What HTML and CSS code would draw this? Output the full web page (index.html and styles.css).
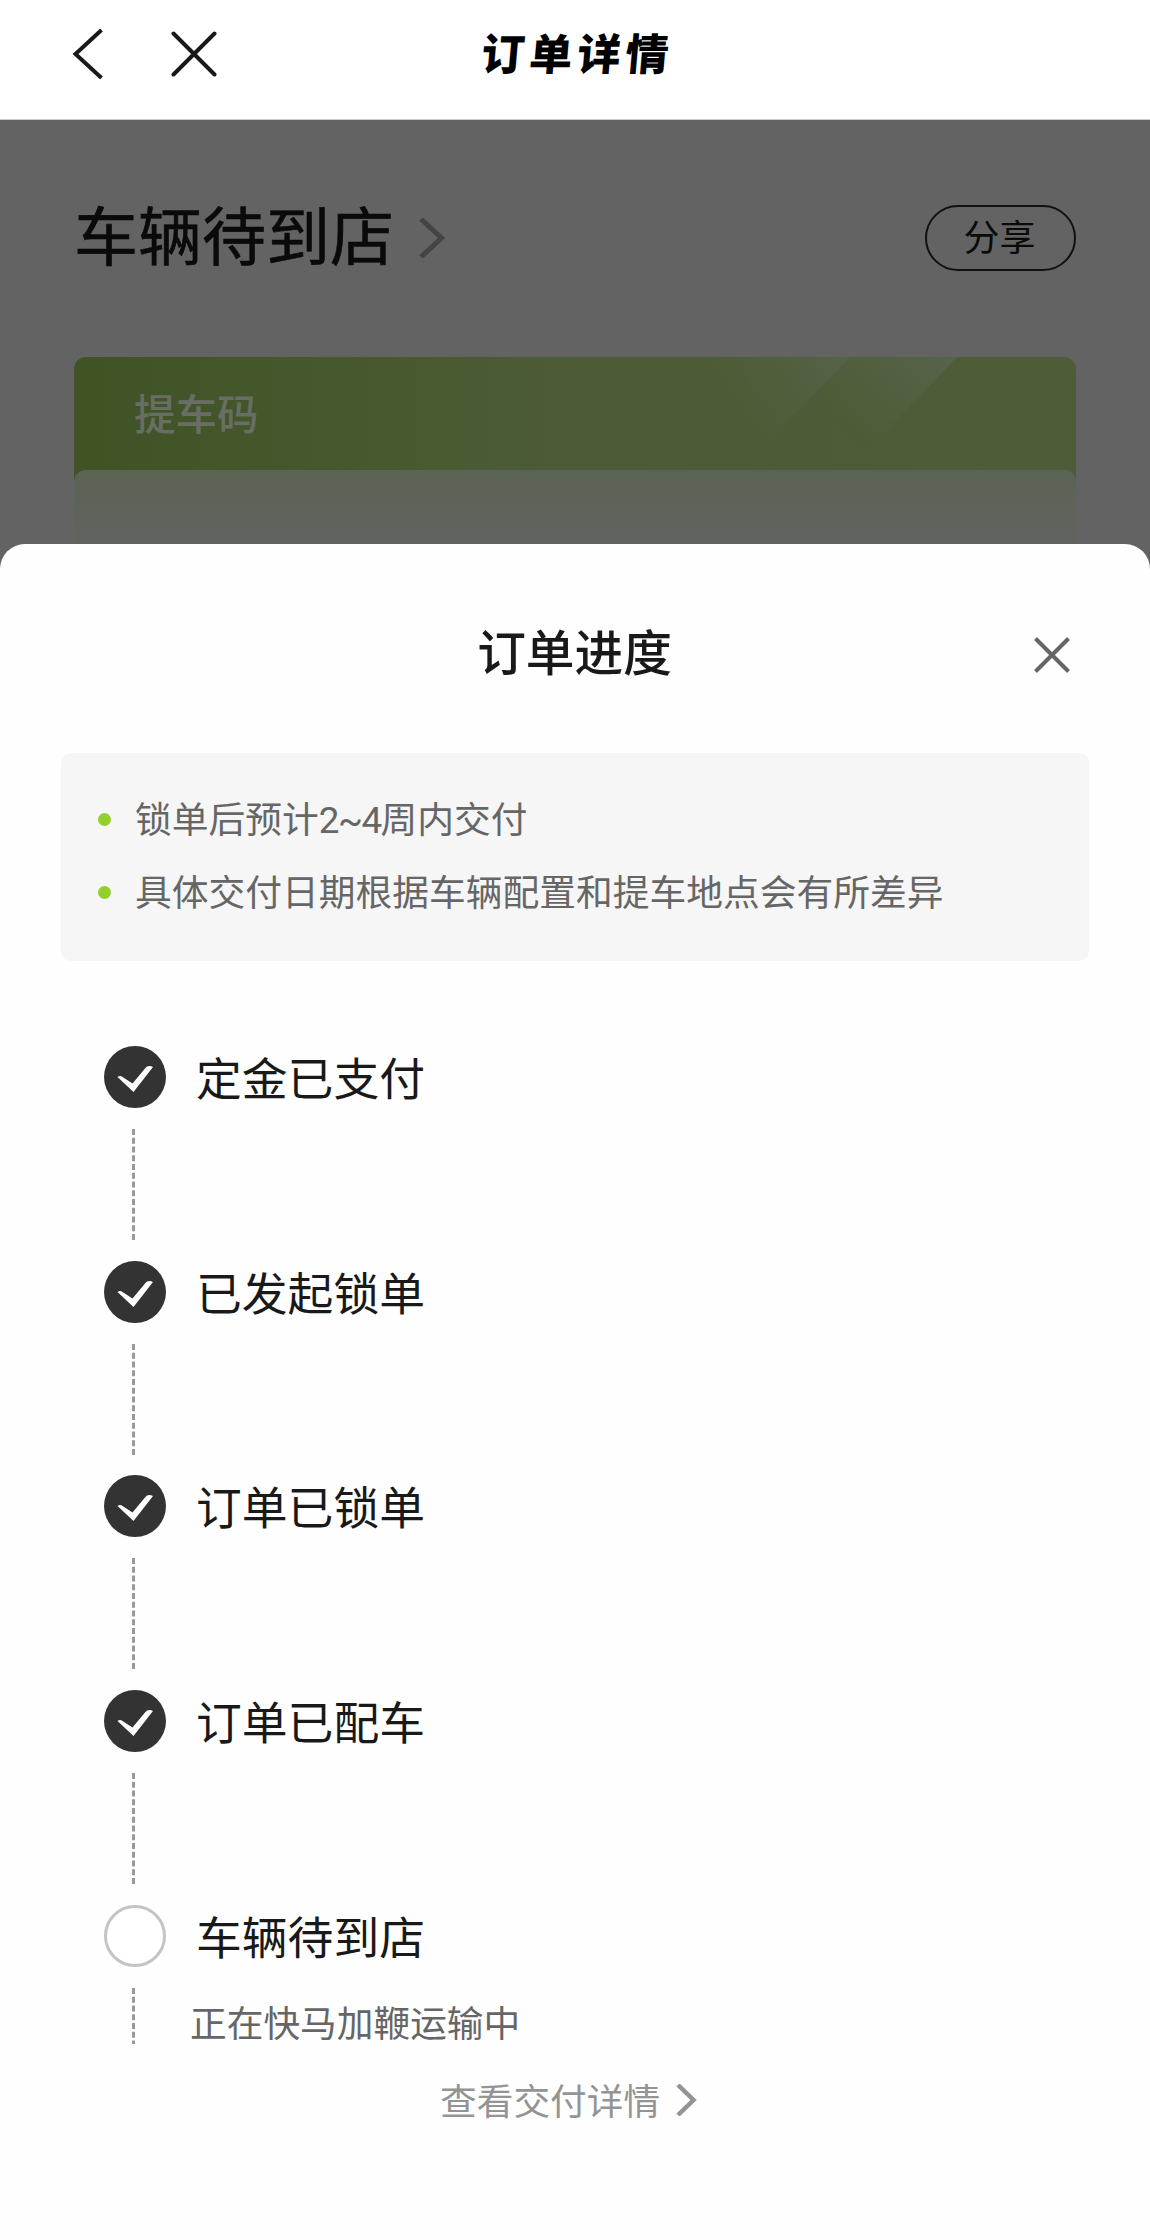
FILE: index.html
```html
<!DOCTYPE html>
<html lang="zh-CN">
<head>
<meta charset="utf-8">
<title>订单详情</title>
<link rel="stylesheet" href="styles.css">
</head>
<body>
<header class="navbar">
  <svg class="nav-back" viewBox="0 0 32 50" fill="none" stroke="#191919" stroke-width="4"><path d="M29.5 1 3.5 25l26 24"/></svg>
  <svg class="nav-close" viewBox="0 0 46 46" fill="none" stroke="#191919" stroke-width="4" stroke-linecap="round"><path d="M2.5 2.5l41 41M43.500 2.500l-41 41"/></svg>
  <h1 class="nav-title">订单详情</h1>
</header>
<main class="order">
  <div class="status">
    <h2 class="status-title">车辆待到店</h2>
    <svg class="status-arrow" viewBox="0 0 27 40" fill="none" stroke="#444" stroke-width="5"><path d="M2 1l20.500 19L2 39"/></svg>
    <button class="share">分享</button>
  </div>
  <section class="pickup">
    <svg class="pickup-rays" viewBox="0 0 320 114" preserveAspectRatio="none">
      <defs>
        <linearGradient id="ray" gradientUnits="userSpaceOnUse" x1="186" y1="0" x2="100" y2="90"><stop offset="0" stop-color="#566349" /><stop offset="1" stop-color="#566349" stop-opacity="0"/></linearGradient>
        <linearGradient id="ray2" gradientUnits="userSpaceOnUse" x1="293" y1="0" x2="210" y2="90"><stop offset="0" stop-color="#566349"/><stop offset="1" stop-color="#566349" stop-opacity="0"/></linearGradient>
        <linearGradient id="edge" x1="0" y1="0" x2="1" y2="0"><stop offset="0" stop-color="#000"/><stop offset="0.600" stop-color="#fff"/></linearGradient>
        <mask id="fade"><rect width="320" height="114" fill="url(#edge)"/></mask>
      </defs>
      <g mask="url(#fade)">
        <path fill="url(#ray)" d="M50 0H196L86 114H0z"/>
        <path fill="url(#ray2)" d="M196 0H303L194 114H86z"/>
      </g>
    </svg>
    <h3 class="pickup-title">提车码</h3>
    <div class="pickup-body"></div>
  </section>
</main>
<section class="sheet">
  <div class="sheet-head">
    <h2 class="sheet-title">订单进度</h2>
    <svg class="sheet-close" viewBox="0 0 36 36" fill="none" stroke="#666" stroke-width="4"><path d="M1.500 1.500l33 33M34.500 1.500l-33 33"/></svg>
  </div>
  <ul class="notes">
    <li class="note"><span class="note-text">锁单后预计<span class="latin">2~4</span>周内交付</span></li>
    <li class="note"><span class="note-text">具体交付日期根据车辆配置和提车地点会有所差异</span></li>
  </ul>
  <ol class="steps">
    <li class="step">
      <svg class="mark" viewBox="0 0 62 62"><circle cx="31" cy="31" r="31" fill="#333"/><path class="tick" d="M13.500 31Q16 29 18.500 31L28.500 37.500 41 22.500Q44 18.500 49 21L29.500 46z"/></svg>
      <span class="step-name">定金已支付</span>
      <svg class="link" viewBox="0 0 3 112"><path d="M1.500 0V112"/></svg>
    </li>
    <li class="step">
      <svg class="mark" viewBox="0 0 62 62"><circle cx="31" cy="31" r="31" fill="#333"/><path class="tick" d="M13.500 31Q16 29 18.500 31L28.500 37.500 41 22.500Q44 18.500 49 21L29.500 46z"/></svg>
      <span class="step-name">已发起锁单</span>
      <svg class="link" viewBox="0 0 3 112"><path d="M1.500 0V112"/></svg>
    </li>
    <li class="step">
      <svg class="mark" viewBox="0 0 62 62"><circle cx="31" cy="31" r="31" fill="#333"/><path class="tick" d="M13.500 31Q16 29 18.500 31L28.500 37.500 41 22.500Q44 18.500 49 21L29.500 46z"/></svg>
      <span class="step-name">订单已锁单</span>
      <svg class="link" viewBox="0 0 3 112"><path d="M1.500 0V112"/></svg>
    </li>
    <li class="step">
      <svg class="mark" viewBox="0 0 62 62"><circle cx="31" cy="31" r="31" fill="#333"/><path class="tick" d="M13.500 31Q16 29 18.500 31L28.500 37.500 41 22.500Q44 18.500 49 21L29.500 46z"/></svg>
      <span class="step-name">订单已配车</span>
      <svg class="link" viewBox="0 0 3 112"><path d="M1.500 0V112"/></svg>
    </li>
    <li class="step current">
      <svg class="mark" viewBox="0 0 62 62"><circle cx="31" cy="31" r="29.500" fill="#fff" stroke="#c4c4c4" stroke-width="3"/></svg>
      <span class="step-name">车辆待到店</span>
      <svg class="link short" viewBox="0 0 3 56"><path d="M1.500 0V56"/></svg>
      <span class="step-note">正在快马加鞭运输中</span>
    </li>
  </ol>
  <a class="more">查看交付详情
    <svg class="more-arrow" viewBox="0 0 22 32" fill="none" stroke="#949494" stroke-width="4.500"><path d="M2 1l15.500 15L2 31"/></svg>
  </a>
</section>
</body>
</html>
```
FILE: styles.css
```css
* { box-sizing: border-box; }
body {
  margin: 0;
  width: 1150px;
  height: 2240px;
  overflow: hidden;
  display: flex;
  flex-direction: column;
  background: #636363;
  font-family: "Noto Sans CJK SC", sans-serif;
  color: #191919;
}
h1, h2, h3, ul, ol { margin: 0; padding: 0; font-weight: 400; }
ul, ol { list-style: none; }
svg { display: block; flex: none; }

.navbar {
  flex: none;
  height: 120px;
  display: grid;
  grid-template-columns: 32px 46px 1fr;
  column-gap: 67px;
  align-items: start;
  padding: 29px 0 0 72px;
  background: #fff;
  border-bottom: 1px solid #ccc;
}
.nav-back { width: 32px; height: 50px; }
.nav-close { width: 46px; height: 46px; margin-top: 2px; }
.nav-title {
  justify-self: start;
  margin: -3px 0 0 198px;
  font-size: 43px;
  font-weight: 900;
  line-height: 50px;
  letter-spacing: 5px;
  color: #000;
  transform: skewX(-5deg);
}

.order { flex: none; height: 424px; padding: 85px 74px 0; }
.status { display: flex; align-items: center; height: 66px; }
.status-title {
  margin-bottom: 12px;
  font-size: 64px;
  line-height: 66px;
  color: #0a0a0a;
  -webkit-text-stroke: 0.6px #0a0a0a;
}
.status-arrow { width: 27px; height: 40px; margin-left: 25px; }
.share {
  margin-left: auto;
  width: 151px;
  height: 66px;
  padding: 0 2px 6px 0;
  border: 2px solid #111;
  border-radius: 33px;
  background: none;
  font: 36px/56px "Noto Sans CJK SC", sans-serif;
  color: #0a0a0a;
}
.pickup {
  position: relative;
  margin-top: 86px;
  height: 187px;
  border-radius: 12px 12px 0 0;
  overflow: hidden;
  background: linear-gradient(90deg, #3f5325 0, #48592f 32%, #4d5c36 50%, #4e5c37 100%);
}
.pickup-rays { position: absolute; left: 580px; top: 0; width: 320px; height: 114px; }
.pickup-title {
  position: relative;
  height: 113px;
  padding: 25px 0 0 60px;
  font-size: 41.500px;
  line-height: 60px;
  font-weight: 500;
  color: #696e64;
}
.pickup-body {
  position: relative;
  height: 74px;
  border-radius: 12px 12px 0 0;
  background: linear-gradient(#5b6354, #626360);
}

.sheet {
  flex: 1;
  display: flex;
  flex-direction: column;
  padding: 0 61px;
  border-radius: 25px 25px 0 0;
  background: #fefefe;
}
.sheet-head {
  display: grid;
  grid-template-columns: 1fr auto 1fr;
  align-items: center;
  height: 209px;
  padding: 8px 19px 0 0;
}
.sheet-title {
  grid-column: 2;
  margin: 0 0 6px 18px;
  font-size: 48.700px;
  font-weight: 500;
  line-height: 60px;
}
.sheet-close { width: 36px; height: 36px; justify-self: end; margin-top: 4px; }
.notes {
  height: 208px;
  padding: 30px 37px;
  border-radius: 10px;
  background: #f6f6f6;
}
.note {
  display: flex;
  align-items: center;
  height: 73px;
  font-size: 36.750px;
  color: #666;
  white-space: nowrap;
}
.note::before {
  content: "";
  flex: none;
  width: 13px;
  height: 13px;
  margin-right: 24px;
  border-radius: 50%;
  background: #93d02c;
}
.note-text { margin-bottom: 5px; }
.latin { font-family: Roboto, sans-serif; letter-spacing: -1.500px; }
.steps { margin-top: 85px; padding-left: 43px; }
.step {
  display: grid;
  grid-template-columns: 62px 1fr;
  grid-template-rows: 62px 1fr;
  column-gap: 30px;
  height: 214.700px;
}
.mark { width: 62px; height: 62px; }
.tick { fill: #fff; }
.step-name { font-size: 45.800px; line-height: 61px; }
.link { width: 3px; height: 112px; margin: 21px 0 0 28px; overflow: hidden; }
.link path { stroke: #999; stroke-width: 3; stroke-dasharray: 6 2.750; }
.link.short { height: 56px; }
.current { height: 136px; }
.step-note { margin: 24px 0 0 -6px; font-size: 36.700px; line-height: 60px; color: #666; }
.more {
  display: flex;
  align-items: center;
  gap: 16px;
  height: 60px;
  margin: 28px 0 0 379px;
  font-size: 36.700px;
  line-height: 60px;
  color: #949494;
}
.more-arrow { width: 22px; height: 32px; margin-top: 3px; }
```
